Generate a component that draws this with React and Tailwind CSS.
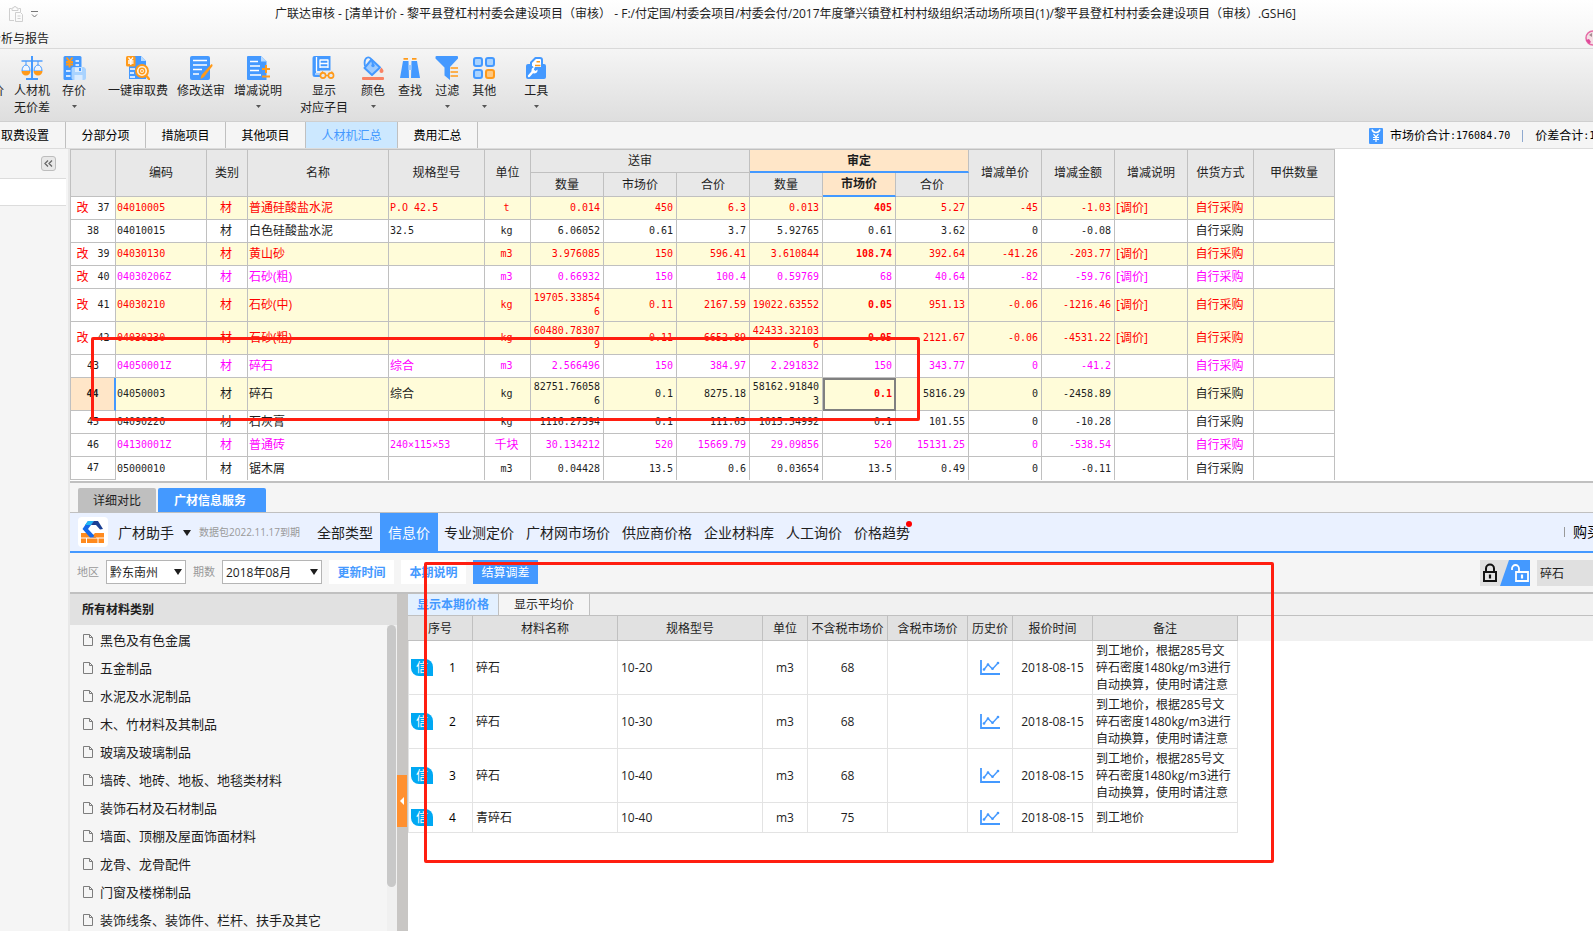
// src/App.jsx
import clsx from "clsx";

const SANS = "font-['Open_Sans','Noto_Sans_CJK_SC',sans-serif]";
const MONO = "font-['DejaVu_Sans_Mono','Noto_Sans_CJK_SC',monospace] text-[10px]";

const BLUE = "#4499ff";
const ORANGE = "#ff9a1a";

/* ---------- Icons ---------- */

function Icon({ children }) {
  return (
    <svg width="24" height="24" viewBox="0 0 24 24" fill="none" aria-hidden="true">
      {children}
    </svg>
  );
}

function ScaleIcon() {
  return (
    <Icon>
      <path d="M12 0v22M6 23h12" stroke={BLUE} strokeWidth="2" />
      <path d="M1.500 5h21" stroke={BLUE} strokeWidth="1.400" />
      <path d="M6 5v4M18 5v4" stroke={BLUE} strokeWidth="1" />
      <path d="M2 15a4 6 0 0 1 8 0zM14 15a4 6 0 0 1 8 0z" fill="#eef5ff" stroke={BLUE} strokeWidth="1" />
      <path d="M1.500 15h9a4.500 4.500 0 0 1-9 0zM13.500 15h9a4.500 4.500 0 0 1-9 0z" fill={ORANGE} />
    </Icon>
  );
}

function SavePriceIcon() {
  return (
    <Icon>
      <path d="M1.500 1.500Q1.500 0 3 0h15q1.500 0 1.500 1.500V24H3q-1.500 0-1.500-1.500z" fill={BLUE} />
      <path d="M4.500 1.500l3 4 3-4M4 6h7M4 8.500h7M7.500 5.500v6" stroke={ORANGE} strokeWidth="1.800" />
      <path d="M13.500 5H17M13.500 9H17M4 15h4.500M4 20h4.500" stroke="#fff" strokeWidth="1.600" />
      <path d="M9.500 13q0-2 2-2H22l2 2v9q0 2-2 2H11.500q-2 0-2-2z" fill="#a9d3ff" />
      <path d="M13 11.500h7V16h-7zM12.500 19h8v5h-8z" fill="#d9ebff" />
      <path d="M17 12h2v3h-2z" fill={BLUE} />
    </Icon>
  );
}

function AuditIcon() {
  return (
    <Icon>
      <path d="M3 0h12l5 5v18H3z" fill={BLUE} />
      <path d="M15 0v5h5z" fill="#b9dbff" />
      <path d="M4 13h5M4 17h4M4 21h5" stroke="#fff" strokeWidth="1.600" />
      <rect width="9.500" height="10.500" rx="1.500" fill={ORANGE} />
      <path d="M2.500 1.500l2.300 2.800L7 1.500M2 5h5.500M2 7h5.500M4.800 4v5" stroke="#fff" strokeWidth="1.300" />
      <circle cx="16" cy="15" r="6" fill="#fff3df" stroke={ORANGE} strokeWidth="1.900" />
      <circle cx="16" cy="15" r="2.700" stroke={ORANGE} strokeWidth="1.400" />
      <path d="M15 15h2" stroke={ORANGE} strokeWidth="1.400" />
      <path d="M20 19.500l4 4.500" stroke={ORANGE} strokeWidth="2.400" />
    </Icon>
  );
}

function EditIcon() {
  return (
    <Icon>
      <rect x="1" width="20" height="24" rx="2" fill={BLUE} />
      <path d="M4 4.500h14M4 9h14M4 13.500h9M4 18h6" stroke="#fff" strokeWidth="1.600" />
      <path d="M22.500 8q1.500.5 1 2L15 21l-3.500 2 1-4z" fill={ORANGE} />
    </Icon>
  );
}

function PlusMinusIcon() {
  return (
    <Icon>
      <path d="M2 0h13l5.500 5.500V24H2Q1 24 1 23V1q0-1 1-1z" fill={BLUE} />
      <path d="M15 0v5.500h5.500z" fill="#b9dbff" />
      <path d="M4 5.500h8M4 10h10M4 14.500h9M4 19h11" stroke="#fff" strokeWidth="1.500" />
      <path d="M20 9v8M16 13h8M16 20.500h8" stroke={ORANGE} strokeWidth="2" />
    </Icon>
  );
}

function ShowIcon() {
  return (
    <Icon>
      <path d="M.5 2q0-2 2-2H18.500v15H4v2h4v4H3q-2.500 0-2.500-2.500z" fill={BLUE} />
      <path d="M4.500 1v14M8 4h8M8 7.500h8M8 11h8M8 3.500V12M16 3.500V12" stroke="#fff" strokeWidth="1.300" />
      <path d="M3 18h5" stroke="#cfe4ff" strokeWidth="1.400" />
      <path d="M8 14.500h14v9H8z" fill="#e9e9e9" />
      <path d="M9 18l2-2.500M21 18l-1.500-2.500M13.500 19.500h3" stroke={ORANGE} strokeWidth="1.300" />
      <circle cx="11" cy="19.500" r="2.600" stroke={ORANGE} strokeWidth="1.600" />
      <circle cx="19" cy="19.500" r="2.600" stroke={ORANGE} strokeWidth="1.600" />
    </Icon>
  );
}

function ColorIcon() {
  return (
    <Icon>
      <path d="M10.500 3.500l8.500 8-8 7.500-7.500-7z" fill="#9dcbff" stroke={BLUE} strokeWidth="2" strokeLinejoin="round" />
      <path d="M4 10Q2.500 3 6.500 1.500q4-1 5.500 7" stroke={BLUE} strokeWidth="1.800" />
      <circle cx="12" cy="9.500" r="1.700" fill={BLUE} />
      <path d="M20.500 11.500q2 2.500 2 3.500a2 2 0 0 1-4 0q0-1 2-3.500z" fill="#f98263" />
      <rect x="1" y="21" width="22" height="3" rx="1" fill="#f98263" />
    </Icon>
  );
}

function FindIcon() {
  return (
    <Icon>
      <path d="M5 5h5.500l.5 17H2zM13.500 5H19l3 17h-9z" fill={BLUE} />
      <path d="M10.500 9h3v5h-3z" fill="#9dcbff" />
      <path d="M5.500 2.800h4.500M14 2.800h4.500" stroke={ORANGE} strokeWidth="1.800" />
    </Icon>
  );
}

function FilterIcon() {
  return (
    <Icon>
      <path d="M.5 1q0-1 1-1h20.500q1 0 1 1v1.500L15 11v13l-5.500-4.500V11.500L.5 2.500z" fill={BLUE} />
      <path d="M15.500 12h7.500M15.500 16h7.500M15.500 20h7.500" stroke={ORANGE} strokeWidth="1.700" />
    </Icon>
  );
}

function OtherIcon() {
  return (
    <Icon>
      <g strokeWidth="2">
        <rect x="2" y="2" width="8" height="8" rx="2" fill="#a9d3ff" stroke={BLUE} />
        <rect x="14" y="2" width="8" height="8" rx="2" fill="#a9d3ff" stroke={BLUE} />
        <rect x="2" y="14" width="8" height="8" rx="2" fill="#a9d3ff" stroke={BLUE} />
        <rect x="14" y="14" width="8" height="8" rx="2" fill="#ffc880" stroke={ORANGE} />
      </g>
    </Icon>
  );
}

function ToolIcon() {
  return (
    <Icon>
      <path d="M4 8h16q2 0 2 2v11q0 2-2 2H4q-2 0-2-2V10q0-2 2-2z" fill={BLUE} />
      <path d="M7 10V6.500L11.500 2H16q2 0 2 2v8H9z" fill="#fff" stroke={BLUE} strokeWidth="2" strokeLinejoin="round" />
      <path d="M12.500 5.800H16M11 9.500h5.500" stroke={ORANGE} strokeWidth="1.500" />
      <path d="M2 12q4-3 8 0h12v5H2z" fill={BLUE} />
      <path d="M5 20l4-4.500" stroke="#fff" strokeWidth="2.400" strokeLinecap="round" />
      <path d="M7.500 14.500Q7.500 11 11 11L9.800 13.500l1.700 1.500 2-1.500q.5 3.500-3 4-3 0-3-3z" fill="#fff" />
    </Icon>
  );
}

function ClipboardIcon() {
  return (
    <svg width="14" height="16" viewBox="0 0 14 16" fill="none" stroke="#cfcfcf" aria-hidden="true">
      <path d="M5 14.500H.5v-12h2M9.500 2.500h2V6M3 4.500V2h1.500q0-1.500 1.500-1.500T7.500 2H9v2.500z" />
      <path d="M6.500 6.500h5l2 2v7h-7zM8.500 10h3M8.500 12.500h3" />
    </svg>
  );
}

function FileIcon() {
  return (
    <svg width="10" height="12" viewBox="0 0 10 12" fill="none" stroke="#7d7d7d" aria-hidden="true">
      <path d="M.5.5h6l3 3v8h-9zM6.500.5v3h3" />
    </svg>
  );
}

function LogoIcon() {
  return (
    <svg width="30" height="30" viewBox="0 0 30 30" aria-hidden="true">
      <rect width="30" height="30" rx="4" fill="#fff" />
      <path d="M3 16h6l3 3.500h3V26H3zM17 16h9v10H13v-6z" fill="#ff8a1e" />
      <path d="M3 21h23M8.500 21v5M20 21v5" stroke="#fff" strokeWidth="1" />
      <path d="M10 4h6L10 12l8 8.500h-6L4.500 12z" fill="#1668e8" />
      <path d="M10 4h6l-3 4H7z" fill="#20b4f4" />
      <path d="M16 4h4l5 8-3 .5L18 8h-5z" fill="#1a3f94" />
      <path d="M15 20.500h3l4-4.500h-4z" fill="#ff8a1e" />
    </svg>
  );
}

function TrendIcon() {
  return (
    <svg width="20" height="15" viewBox="0 0 20 15" fill="none" stroke={BLUE} aria-hidden="true">
      <path d="M1 0v14h19" strokeWidth="1.800" />
      <path d="M4 9.500L8 4.500l4.500 4.500L18 3" strokeWidth="1.400" />
      <g fill={BLUE} stroke="none">
        <circle cx="4" cy="9.500" r="1.300" />
        <circle cx="8" cy="4.500" r="1.300" />
        <circle cx="12.500" cy="8.700" r="1.300" />
        <circle cx="18" cy="3" r="1.300" />
      </g>
    </svg>
  );
}

function Caret({ className }) {
  return (
    <svg width="8" height="6" viewBox="0 0 8 6" className={className} aria-hidden="true">
      <path d="M0 0h8L4 6z" fill="currentColor" />
    </svg>
  );
}

/* ---------- Data ---------- */

const toolGroups = [
  {
    className: "gap-3",
    tools: [
      { lines: ["人材机", "无价差"], icon: ScaleIcon },
      { lines: ["存价"], icon: SavePriceIcon, menu: true },
    ],
  },
  {
    className: "ml-[22px] gap-[9px]",
    tools: [
      { lines: ["一键审取费"], icon: AuditIcon },
      { lines: ["修改送审"], icon: EditIcon },
      { lines: ["增减说明"], icon: PlusMinusIcon, menu: true },
    ],
  },
  {
    className: "ml-[18px] gap-[13px]",
    tools: [
      { lines: ["显示", "对应子目"], icon: ShowIcon },
      { lines: ["颜色"], icon: ColorIcon, menu: true },
      { lines: ["查找"], icon: FindIcon },
      { lines: ["过滤"], icon: FilterIcon, menu: true },
      { lines: ["其他"], icon: OtherIcon, menu: true },
    ],
  },
  {
    className: "ml-7",
    tools: [{ lines: ["工具"], icon: ToolIcon, menu: true }],
  },
];

const pageTabs = ["分部分项", "措施项目", "其他项目", "人材机汇总", "费用汇总"];

// code, name, spec, unit, 送审(3), 审定(3), 增减单价, 增减金额, 增减说明
const rows = [
  { no: 37, tone: "red", mark: true, fill: true, bold: true, cells: ["04010005", "普通硅酸盐水泥", "P.O 42.5", "t", "0.014", "450", "6.3", "0.013", "405", "5.27", "-45", "-1.03", "[调价]"] },
  { no: 38, tone: "black", cells: ["04010015", "白色硅酸盐水泥", "32.5", "kg", "6.06052", "0.61", "3.7", "5.92765", "0.61", "3.62", "0", "-0.08", ""] },
  { no: 39, tone: "red", mark: true, fill: true, bold: true, cells: ["04030130", "黄山砂", "", "m3", "3.976085", "150", "596.41", "3.610844", "108.74", "392.64", "-41.26", "-203.77", "[调价]"] },
  { no: 40, tone: "pink", mark: true, cells: ["04030206Z", "石砂(粗)", "", "m3", "0.66932", "150", "100.4", "0.59769", "68", "40.64", "-82", "-59.76", "[调价]"] },
  { no: 41, tone: "red", mark: true, fill: true, bold: true, tall: true, cells: ["04030210", "石砂(中)", "", "kg", "19705.338546", "0.11", "2167.59", "19022.63552", "0.05", "951.13", "-0.06", "-1216.46", "[调价]"] },
  { no: 42, tone: "red", mark: true, fill: true, bold: true, tall: true, cells: ["04030230", "石砂(粗)", "", "kg", "60480.783079", "0.11", "6652.89", "42433.321036", "0.05", "2121.67", "-0.06", "-4531.22", "[调价]"] },
  { no: 43, tone: "pink", cells: ["04050001Z", "碎石", "综合", "m3", "2.566496", "150", "384.97", "2.291832", "150", "343.77", "0", "-41.2", ""] },
  { no: 44, tone: "black", fill: true, bold: true, tall: true, current: true, cells: ["04050003", "碎石", "综合", "kg", "82751.760586", "0.1", "8275.18", "58162.918403", "0.1", "5816.29", "0", "-2458.89", ""] },
  { no: 45, tone: "black", cells: ["04090220", "石灰膏", "", "kg", "1116.27394", "0.1", "111.63", "1015.54992", "0.1", "101.55", "0", "-10.28", ""] },
  { no: 46, tone: "pink", cells: ["04130001Z", "普通砖", "240×115×53", "千块", "30.134212", "520", "15669.79", "29.09856", "520", "15131.25", "0", "-538.54", ""] },
  { no: 47, tone: "black", last: true, cells: ["05000010", "锯木屑", "", "m3", "0.04428", "13.5", "0.6", "0.03654", "13.5", "0.49", "0", "-0.11", ""] },
];

const tones = {
  red: "text-[#ff0000]",
  pink: "text-[#ff00ff]",
  black: "text-[#1e1e1e]",
};

const sources = ["专业测定价", "广材网市场价", "供应商价格", "企业材料库", "人工询价", "价格趋势"];

const categories = [
  "黑色及有色金属",
  "五金制品",
  "水泥及水泥制品",
  "木、竹材料及其制品",
  "玻璃及玻璃制品",
  "墙砖、地砖、地板、地毯类材料",
  "装饰石材及石材制品",
  "墙面、顶棚及屋面饰面材料",
  "龙骨、龙骨配件",
  "门窗及楼梯制品",
  "装饰线条、装饰件、栏杆、扶手及其它",
];

const longNote = ["到工地价，根据285号文", "碎石密度1480kg/m3进行", "自动换算，使用时请注意"];

const prices = [
  { name: "碎石", spec: "10-20", price: 68, note: longNote },
  { name: "碎石", spec: "10-30", price: 68, note: longNote },
  { name: "碎石", spec: "10-40", price: 68, note: longNote },
  { name: "青碎石", spec: "10-40", price: 75, note: ["到工地价"] },
];

/* ---------- Header ---------- */

function TitleBar() {
  return (
    <header className="h-[49px] border-b border-[#d9d9d9] bg-linear-to-b from-white to-[#f3f3f3]">
      <div className="flex h-7 items-center">
        <div className="flex w-10 shrink-0 items-center gap-2 pl-[9px]">
          <ClipboardIcon />
          <svg width="7" height="7" viewBox="0 0 7 7" fill="none" stroke="#777" aria-hidden="true">
            <path d="M0 .5h7M1 3.500l2.500 2.500L6 3.500" />
          </svg>
        </div>
        <h1 className="flex-1 pr-[62px] text-center text-xs whitespace-nowrap">
          广联达审核 - [清单计价 - 黎平县登杠村村委会建设项目（审核） - F:/付定国/村委会项目/村委会付/2017年度肇兴镇登杠村村级组织活动场所项目(1)/黎平县登杠村村委会建设项目（审核）.GSH6]
        </h1>
      </div>
      <div className="flex h-5 items-center justify-between overflow-hidden">
        <button className="-ml-[11px] pt-[2px] text-xs">分析与报告</button>
        <svg width="8" height="16" viewBox="0 0 8 16" aria-hidden="true">
          <circle cx="8" cy="8" r="7" fill="#f4dfe4" stroke="#e66aa5" strokeWidth="1.500" />
          <path d="M1 10l3-1 2 3-2 2z" fill="#e0489a" />
          <path d="M4 5l3-2v4z" fill="#a58c92" />
        </svg>
      </div>
    </header>
  );
}

function Toolbar() {
  return (
    <div className="flex h-[73px] overflow-hidden border-b border-[#cfcfcf] bg-linear-to-b from-[#f5f5f5] to-[#dedede] pt-[7px] text-xs leading-[17px]">
      <button className="-ml-[8px] flex w-3 items-start pt-[26px]">价</button>
      {toolGroups.map((group, i) => (
        <div key={i} className={clsx("flex items-start", i === 0 && "ml-[10px]", group.className)}>
          {group.tools.map(({ lines, icon: ToolSvg, menu }) => (
            <button key={lines[0]} className="flex flex-col items-center whitespace-nowrap">
              <ToolSvg />
              <span className="mt-[2px]">{lines[0]}</span>
              {lines[1] && <span>{lines[1]}</span>}
              {menu && (
                <svg width="5" height="3" viewBox="0 0 5 3" className="mt-[6px]" aria-hidden="true">
                  <path d="M0 0h5L2.500 3z" fill="#555" />
                </svg>
              )}
            </button>
          ))}
        </div>
      ))}
    </div>
  );
}

function PageTabs() {
  return (
    <nav className="flex h-[27px] border-b border-[#dcdcdc] bg-[#f5f5f5] text-xs text-black">
      <button className="w-[66px] border-r border-[#c0c0c0] pt-[2px] pl-px text-left">取费设置</button>
      {pageTabs.map((tab) => (
        <button
          key={tab}
          className={clsx(
            "border-r border-[#c0c0c0] pt-[2px]",
            tab === "人材机汇总" ? "w-[92px] bg-[#cce8ff] text-[#4499ff]" : "w-20"
          )}
        >
          {tab}
        </button>
      ))}
      <div className="ml-auto flex w-[224px] items-center overflow-hidden pt-px whitespace-nowrap">
        <svg width="14" height="16" viewBox="0 0 14 16" className="mr-[7px] shrink-0" fill="none" stroke="#fff" aria-hidden="true">
          <rect width="14" height="16" rx="1" fill={BLUE} stroke="none" />
          <path d="M3 1.500q1 3 4 3t4-3" strokeWidth="1.500" />
          <path d="M4.500 6L7 9l2.500-3M4 9.500h6M4 11.500h6M7 9v5" strokeWidth="1.200" />
        </svg>
        <span>市场价合计</span>
        <span className={MONO}>:176084.70</span>
        <span className="mx-3 h-3 w-px shrink-0 bg-[#8fa9cf]" />
        <span>价差合计</span>
        <span className={MONO}>:1</span>
      </div>
    </nav>
  );
}

/* ---------- Summary table ---------- */

const head = "border-r border-b border-[#c0c0c0] bg-[#e8e8e8] p-0 font-normal";

function SummaryTable() {
  return (
    <div className="relative border-b-2 border-[#c0c0c0] bg-white pb-px">
      <table className="w-[1265px] table-fixed border-separate border-spacing-0 border-t border-[#c0c0c0] text-xs leading-[14px] text-[#1e1e1e]">
        <colgroup>
          <col className="w-[46px]" />
          <col className="w-[91px]" />
          <col className="w-[41px]" />
          <col className="w-[141px]" />
          <col className="w-[96px]" />
          <col className="w-[46px]" />
          <col className="w-[73px]" span={9} />
          <col className="w-[66px]" />
          <col className="w-[81px]" />
        </colgroup>
        <thead>
          <tr className="h-[23px]">
            <th rowSpan={2} className={clsx(head, "border-l")} aria-label="序号" />
            {["编码", "类别", "名称", "规格型号", "单位"].map((t) => (
              <th key={t} rowSpan={2} className={head}>{t}</th>
            ))}
            <th colSpan={3} className={head}>送审</th>
            <th colSpan={3} className="border-r border-b-2 border-r-[#c0c0c0] border-b-[#4499ff] bg-[#ffe6c8] p-0 font-bold">
              审定
            </th>
            {["增减单价", "增减金额", "增减说明", "供货方式", "甲供数量"].map((t) => (
              <th key={t} rowSpan={2} className={head}>{t}</th>
            ))}
          </tr>
          <tr className="h-6">
            <th className={head}>数量</th>
            <th className={head}>市场价</th>
            <th className={head}>合价</th>
            <th className={head}>数量</th>
            <th className="border-r border-b-2 border-r-[#c0c0c0] border-b-[#4499ff] bg-[#ffe6c8] p-0 font-bold">市场价</th>
            <th className={head}>合价</th>
          </tr>
        </thead>
        <tbody>
          {rows.map((row) => {
            const [code, name, spec, unit, ...rest] = row.cells;
            const numbers = rest.slice(0, 8);
            const cell = clsx(
              "border-r border-[#c0c0c0] py-0 pr-[3px] pl-px",
              !row.last && "border-b",
              row.fill && "bg-[#fffcd9]"
            );
            return (
              <tr key={row.no} className={clsx(row.tall ? "h-[33px]" : "h-[23px]", tones[row.tone])}>
                <td
                  className={clsx(
                    "border-b border-l border-[#c0c0c0] p-0",
                    row.current ? "border-r-2 border-r-[#4499ff] bg-[#ffe6c8] font-bold" : "border-r"
                  )}
                >
                  <div className="flex items-center justify-center gap-[9px]">
                    {row.mark && <span className="text-[#ff0000]">改</span>}
                    <span className={clsx(MONO, "text-[#1e1e1e]")}>{row.no}</span>
                  </div>
                </td>
                <td className={clsx(cell, MONO)}>{code}</td>
                <td className={clsx(cell, "text-center")}>材</td>
                <td className={cell}>{name}</td>
                <td className={clsx(cell, spec !== "综合" && MONO)}>{spec}</td>
                <td className={clsx(cell, "text-center", unit !== "千块" && MONO)}>{unit}</td>
                {numbers.map((value, i) => (
                  <td
                    key={i}
                    className={clsx(
                      cell,
                      MONO,
                      "text-right break-all",
                      i === 4 && row.bold && "font-bold text-[#ff0000]",
                      i === 4 && row.current && "outline-2 -outline-offset-2 outline-[#808080]"
                    )}
                  >
                    {value}
                  </td>
                ))}
                <td className={clsx(cell, "pl-[3px]")}>{rest[8]}</td>
                <td className={clsx(cell, "text-center")}>自行采购</td>
                <td className={cell} />
              </tr>
            );
          })}
        </tbody>
      </table>
      <div className="pointer-events-none absolute top-[188px] left-[21px] h-[84px] w-[829px] rounded-[2px] border-3 border-[#ff1e10]" />
    </div>
  );
}

/* ---------- Price service ---------- */

function ServiceBar() {
  return (
    <>
      <div className="flex h-[30px] items-end gap-[2px] border-b border-[#c0c0c0] bg-[#f5f5f5] pl-2 text-xs">
        <button className="h-6 w-[78px] rounded-t-[2px] bg-[#bfbfbf] pt-px">详细对比</button>
        <button className="h-6 w-[108px] rounded-t-[2px] bg-[#4499ff] pt-px pr-1 font-bold text-white">广材信息服务</button>
      </div>
      <div className="flex h-10 items-center overflow-hidden border-b-2 border-[#4499ff] bg-[#eaf1ff] pl-2 text-sm whitespace-nowrap">
        <LogoIcon />
        <button className="ml-[10px] flex items-center gap-[9px] pt-px">
          广材助手
          <Caret />
        </button>
        <span className="ml-2 text-[10px] text-[#999]">数据包2022.11.17到期</span>
        <button className="ml-[17px] pt-[2px]">全部类型</button>
        <button className="ml-[7px] h-full w-[58px] bg-[#4499ff] pt-[2px] text-white">信息价</button>
        <div className="ml-[6px] flex gap-3 pt-[2px]">
          {sources.map((s) => (
            <button key={s} className="relative">
              {s}
              {s === "价格趋势" && <span className="absolute -top-[2px] -right-[2px] size-[6px] rounded-full bg-[#ff0000]" />}
            </button>
          ))}
        </div>
        <div className="ml-auto flex w-[29px] shrink-0 items-center gap-2 overflow-hidden text-black">
          <span className="h-[10px] w-px shrink-0 bg-[#999]" />
          购买
        </div>
      </div>
    </>
  );
}

function Picker({ id, label, value, className }) {
  return (
    <>
      <label htmlFor={id} className="text-[11px] text-[#999]">{label}</label>
      <div className={clsx("relative h-6", className)}>
        <select
          id={id}
          defaultValue={value}
          className="size-full appearance-none border border-[#b5b5b5] bg-white pt-[2px] pl-[3px] text-xs text-[#1e1e1e]"
        >
          <option>{value}</option>
        </select>
        <Caret className="pointer-events-none absolute top-[9px] right-1" />
      </div>
    </>
  );
}

function FilterBar() {
  return (
    <div className="flex h-[41px] items-start gap-[7px] overflow-hidden border-b-2 border-[#c0c0c0] bg-[#f5f5f5] pt-[7px] pl-[7px] text-xs leading-6">
      <Picker id="region" label="地区" value="黔东南州" className="w-20" />
      <Picker id="period" label="期数" value="2018年08月" className="w-[100px]" />
      <button className="h-6 w-[65px] bg-white pt-px font-bold text-[#4499ff]">更新时间</button>
      <button className="h-6 w-[65px] bg-white pt-px font-bold text-[#4499ff]">本期说明</button>
      <button className="h-6 w-[65px] bg-[#4499ff] pt-px text-white">结算调差</button>
      <div className="ml-auto flex gap-[7px]">
        <button aria-label="锁定" className="h-[26px] w-[50px]">
          <svg width="50" height="26" viewBox="0 0 50 26" fill="none" aria-hidden="true">
            <path d="M0 0h50v26H0z" fill="#e0e0e0" />
            <path d="M29 0h21v26H20z" fill={BLUE} />
            <path d="M6 12V8.500a4 4 0 0 1 8 0V12M4 12h12v9H4z" stroke="#111" strokeWidth="2" />
            <path d="M10 14.500v4" stroke="#111" strokeWidth="2.200" />
            <path d="M32 10V8.500a3.500 3.500 0 0 1 7 0V12M36 12h12v9H36z" stroke="#fff" strokeWidth="1.800" />
            <path d="M42 14.500v4" stroke="#fff" strokeWidth="2.200" />
          </svg>
        </button>
        <input
          aria-label="搜索材料"
          defaultValue="碎石"
          className="h-[26px] w-14 bg-[#e0e0e0] pl-[3px] text-xs"
        />
      </div>
    </div>
  );
}

function Categories() {
  return (
    <aside className="flex w-[327px] shrink-0 flex-col bg-[#f5f5f5]">
      <h2 className="h-[31px] shrink-0 bg-[#e1e1e1] pl-3 text-xs leading-[31px] font-bold">所有材料类别</h2>
      <div className="flex min-h-0 flex-1 justify-between overflow-hidden">
        <ul className="text-[13px] leading-7">
          {categories.map((c) => (
            <li key={c}>
              <button className="flex h-7 items-center gap-[7px] pt-[2px] pl-[13px] whitespace-nowrap">
                <FileIcon />
                {c}
              </button>
            </li>
          ))}
        </ul>
        <div className="w-[10px] bg-[#f0f0f0]">
          <div className="h-[262px] w-[9px] rounded-full bg-[#c8c8c8]" />
        </div>
      </div>
    </aside>
  );
}

const th = "h-[25px] border-r border-b border-[#c0c0c0] bg-[#e1e1e1] p-0 pt-px font-normal whitespace-nowrap";
const td = "border-r border-b border-[#e3e3e3] p-0";

function PriceTable() {
  return (
    <div className="min-w-0 flex-1 bg-white text-xs">
      <div className="flex h-[22px] border-b border-[#c0c0c0] bg-[#f1f1f1]">
        <button className="w-[91px] border-r border-[#c0c0c0] bg-[#e3f0ff] font-bold text-[#4499ff]">显示本期价格</button>
        <button className="w-[91px] border-r border-[#c0c0c0] bg-[#f5f5f5] pt-px">显示平均价</button>
      </div>
      <div className="bg-linear-to-b from-[#f0f0f0] from-[25px] to-white to-[25px]">
        <table className="w-[830px] table-fixed border-separate border-spacing-0 leading-[17px]">
          <colgroup>
            <col className="w-[65px]" />
            <col className="w-[145px]" />
            <col className="w-[145px]" />
            <col className="w-[45px]" />
            <col className="w-20" />
            <col className="w-20" />
            <col className="w-[45px]" />
            <col className="w-20" />
            <col className="w-[145px]" />
          </colgroup>
          <thead>
            <tr>
              {["序号", "材料名称", "规格型号", "单位", "不含税市场价", "含税市场价", "历史价", "报价时间", "备注"].map((t) => (
                <th key={t} className={th}>{t}</th>
              ))}
            </tr>
          </thead>
          <tbody>
            {prices.map((p, i) => (
              <tr key={i} className={p.note.length > 1 ? "h-[54px]" : "h-[30px]"}>
                <td className={clsx(td, "border-l")}>
                  <div className="flex items-center pl-[2px] text-black">
                    <span className="h-[17px] w-[22px] rounded-tr-[8px] rounded-bl-[8px] bg-[#00a8f3] text-center text-white">信</span>
                    <span className="flex-1 text-center">{i + 1}</span>
                  </div>
                </td>
                <td className={clsx(td, "pl-[3px]")}>{p.name}</td>
                <td className={clsx(td, "pl-[3px]")}>{p.spec}</td>
                <td className={clsx(td, "text-center")}>m3</td>
                <td className={clsx(td, "text-center")}>{p.price}</td>
                <td className={td} />
                <td className={td}>
                  <button aria-label="历史价" className="flex w-full justify-center">
                    <TrendIcon />
                  </button>
                </td>
                <td className={clsx(td, "text-center")}>2018-08-15</td>
                <td className={clsx(td, "pl-[3px] whitespace-nowrap")}>
                  {p.note.map((line) => (
                    <div key={line}>{line}</div>
                  ))}
                </td>
              </tr>
            ))}
          </tbody>
        </table>
      </div>
    </div>
  );
}

export default function App() {
  return (
    <div className={clsx(SANS, "relative flex h-screen flex-col overflow-hidden bg-[#f5f5f5] text-[#1e1e1e]")}>
      <TitleBar />
      <Toolbar />
      <PageTabs />
      <div className="flex min-h-0 flex-1">
        {/* 左侧折叠栏 */}
        <div className="w-[66px] shrink-0">
          <div className="flex h-[30px] justify-end border-b border-[#dcdcdc] pt-[7px] pr-[10px]">
            <button aria-label="折叠" className="flex size-[15px] items-center justify-center rounded-[3px] border border-[#bdbdbd] bg-[#e8e8e8]">
              <svg width="9" height="7" viewBox="0 0 9 7" fill="none" stroke="#666" strokeWidth="1.300" aria-hidden="true">
                <path d="M4 .5l-3 3 3 3M8 .5l-3 3 3 3" />
              </svg>
            </button>
          </div>
          <div className="h-[27px] border-b border-[#dcdcdc] bg-white" />
        </div>
        <div className="ml-[2px] w-[2px] shrink-0 bg-[#e8e8e8]" />
        <main className="flex min-w-0 flex-1 flex-col">
          <SummaryTable />
          <ServiceBar />
          <FilterBar />
          <div className="flex min-h-0 flex-1">
            <Categories />
            <div className="w-[11px] shrink-0 bg-[#c8c6c4] pt-[181px]">
              <button aria-label="收起" className="flex h-[52px] w-[10px] items-center justify-center bg-[#ff9030]">
                <svg width="4" height="8" viewBox="0 0 4 8" aria-hidden="true">
                  <path d="M4 0v8L0 4z" fill="#fff" />
                </svg>
              </button>
            </div>
            <PriceTable />
          </div>
        </main>
      </div>
      <div className="pointer-events-none absolute top-[562px] left-[424px] h-[301px] w-[850px] rounded-[2px] border-3 border-[#ff1e10]" />
    </div>
  );
}
